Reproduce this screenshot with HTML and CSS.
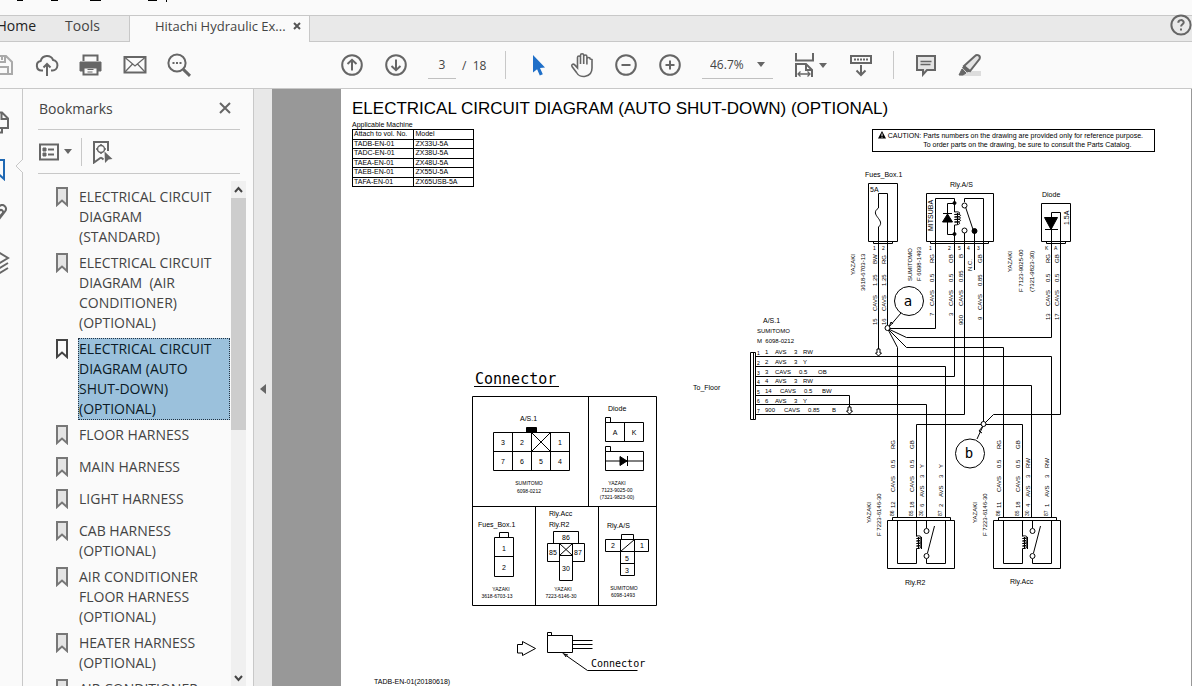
FILE: index.html
```html
<!DOCTYPE html>
<html lang="en">
<head>
<meta charset="utf-8">
<title>Hitachi Hydraulic Excavator</title>
<link rel="stylesheet" href="styles.css">
</head>
<body>
<div class="app">
  <div class="menu-strip">
    <svg width="180" height="8" viewBox="0 0 180 8" aria-hidden="true"><path d="M17 0h6v1h-6zM51 0h7v1h-7zM90 0h11v1h-11zM148 0h9v1h-9zM166 0h1v2h-1z"/></svg>
  </div>
  <nav class="tabs">
    <button class="tab home">Home</button>
    <button class="tab tools">Tools</button>
    <div class="tab doc-tab"><span>Hitachi Hydraulic Ex...</span>
      <button class="tab-close" aria-label="Close tab"><svg width="8" height="8" viewBox="0 0 8 8"><path d="M1 1l6 6M7 1L1 7" stroke="#555" stroke-width="2"/></svg></button>
    </div>
    <button class="help" aria-label="Help"><svg class="ic" width="24" height="24" viewBox="0 0 24 24"><circle cx="13" cy="12" r="9.600"/><path d="M10.300 9.800c0-3.600 5.400-3.400 5.400-.4 0 1.800-2.600 2-2.600 4.200M13 15.600v2"/></svg></button>
  </nav>
  <div class="toolbar">
    <button class="tool save" aria-label="Save"><svg class="ic pale" width="24" height="24" viewBox="0 0 24 24"><path d="M2 3h14l6 6v12H2zM7 3v6h8V3M6 21v-7h12v7"/><path d="M12 4v3"/></svg></button>
    <button class="tool" aria-label="Upload"><svg class="ic" width="24" height="24" viewBox="0 0 24 24"><path d="M8 17.500H6.500a4.800 4.800 0 0 1-.8-9.500 6.600 6.600 0 0 1 12.400-1 5.300 5.300 0 0 1-.6 10.500H16M12 23V11M8.500 14.500L12 11l3.500 3.500"/></svg></button>
    <button class="tool" aria-label="Print"><svg class="ic" width="24" height="24" viewBox="0 0 24 24"><path class="solid" d="M1 9h21v9h-3v-3H4v3H1z"/><path d="M4.500 8V2.500h14V8M4.500 15v6.500h14V15"/><path stroke-width="1.200" d="M8.500 16.500h6M8.500 19h5"/></svg></button>
    <button class="tool" aria-label="Mail"><svg class="ic" width="24" height="24" viewBox="0 0 24 24"><path d="M1.500 4h21v15.500h-21z"/><path stroke-width="1.200" d="M2 4.500l10 8.500 10-8.500M2 19l7.500-8M22 19l-7.500-8"/></svg></button>
    <button class="tool" aria-label="Search"><svg class="ic" width="24" height="24" viewBox="0 0 24 24"><circle cx="10" cy="10" r="8.600"/><path stroke-width="3" d="M16.300 16.300l6.700 6.500"/><path stroke-dasharray="2 1.500" d="M5.500 10h9"/></svg></button>
    <button class="tool first-nav" aria-label="Previous page"><svg class="ic" width="24" height="24" viewBox="0 0 24 24"><circle cx="12" cy="12" r="9.800"/><path d="M12 17.500V7M7.500 11L12 6.800l4.500 4.200"/></svg></button>
    <button class="tool" aria-label="Next page"><svg class="ic" width="24" height="24" viewBox="0 0 24 24"><circle cx="12" cy="12" r="9.800"/><path d="M12 6.500V17M7.500 13l4.500 4.200 4.500-4.200"/></svg></button>
    <input class="page-no" type="text" value="3" aria-label="Page number">
    <span class="page-total">/&nbsp; 18</span>
    <span class="sep"></span>
    <button class="tool" aria-label="Select"><svg width="24" height="24" viewBox="0 0 24 24"><path fill="#1f6fc8" d="M7 2l12 12.500-5 .4 2.800 6.300-3 1.300-2.700-6.300L7 19.500z"/></svg></button>
    <button class="tool" aria-label="Hand"><svg class="ic hand" width="26" height="26" viewBox="0 0 26 26"><path d="M8.500 14V5.500c0-2 3-2 3 0V12M11.500 5V3.300c0-2 3.200-2 3.200 0V12M14.700 4.500c0-2 3.200-2 3.200 0V12.500M17.900 7c0-2 3.300-2 3.300 0l1.800.5v8.500c0 10-12.500 10.500-15.500 4.500L3 14.500c-1-2 1.200-3.200 2.700-1.600l2.800 3V8"/></svg></button>
    <button class="tool" aria-label="Zoom out"><svg class="ic" width="24" height="24" viewBox="0 0 24 24"><circle cx="12" cy="12" r="9.800"/><path d="M7.500 12h9"/></svg></button>
    <button class="tool" aria-label="Zoom in"><svg class="ic" width="24" height="24" viewBox="0 0 24 24"><circle cx="12" cy="12" r="9.800"/><path d="M7.500 12h9M12 7.500v9"/></svg></button>
    <div class="zoom"><select aria-label="Zoom level"><option>46.7%</option></select><span class="caret"></span></div>
    <button class="tool fit" aria-label="Fit width"><svg class="ic" width="24" height="26" viewBox="0 0 24 26"><path d="M3 1v7.500h17V1M3 25V12h10l6 6v7M13 12v6h6"/><path stroke-width="1.300" d="M5 22h12M7.500 19.500L5 22l2.500 2.500M14.500 19.500L17 22l-2.500 2.500"/></svg><span class="caret"></span></button>
    <button class="tool key" aria-label="Reading mode"><svg class="ic" width="24" height="24" viewBox="0 0 24 24"><path d="M2 3h20v7H2zM12 12v10M7.500 17.500l4.500 4.500 4.500-4.500"/><path stroke-dasharray="2 1" d="M5 6.500h14"/></svg></button>
    <span class="sep late"></span>
    <button class="tool" aria-label="Comment"><svg class="ic" width="24" height="24" viewBox="0 0 24 24"><path fill="#e4e4e4" d="M3 3h18v14h-8l-4 4.500V17H3z"/><path stroke-width="1.300" d="M6.500 8.500h11M6.500 11.500h10"/></svg></button>
    <button class="tool" aria-label="Highlight"><svg class="ic" width="24" height="24" viewBox="0 0 24 24"><path fill="#ddd" stroke="none" d="M9 18h14v5H1z"/><path fill="#e4e4e4" d="M6 13L17 3c2-2 6-.5 4.500 3L12 18z"/><path class="solid" d="M6 13l6 5-3 1-4.500-4zM1 22l3-6 4 4-3 2z"/></svg></button>
  </div>
  <div class="workspace">
    <aside class="rail">
      <button aria-label="Pages"><svg class="ic" width="24" height="24" viewBox="0 0 24 24"><path d="M3 2.500h13l6 6V18H3zM15.500 3v6H22M16 18v4.500H2"/></svg></button>
      <button class="on" aria-label="Bookmarks"><svg width="24" height="24" viewBox="0 0 24 24" fill="none" stroke="#1f68b3" stroke-width="2"><path d="M6 3h12v19l-6-5.500L6 22z"/></svg></button>
      <button aria-label="Attachments"><svg class="ic" width="24" height="24" viewBox="0 0 24 24"><path d="M9 18l7.500-8.500c2-2.500-1.500-5-3.500-2.500L5 16M4 12l9-9.500c4-4 9 1 6 5L10 19"/></svg></button>
      <button aria-label="Layers"><svg class="ic" width="24" height="28" viewBox="0 0 24 28"><path d="M12 3l10 6-10 6L2 9zM22 14l-10 6-10-6M22 19l-10 6-10-6"/></svg></button>
      <svg class="notch" width="8" height="16" viewBox="0 0 8 16"><path d="M8 1L1 8l7 7" fill="#fafafa" stroke="#c8c8c8"/></svg>
    </aside>
    <section class="panel">
      <header class="panel-head"><h2>Bookmarks</h2><button aria-label="Close panel"><svg class="ic" width="12" height="12" viewBox="0 0 12 12"><path d="M1 1l10 10M11 1L1 11"/></svg></button></header>
      <div class="panel-tools">
        <button class="opts" aria-label="Options"><svg class="ic" width="20" height="18" viewBox="0 0 20 18"><path d="M1 1.500h18v15H1z"/><path d="M9 6.500h6M9 11.500h6"/><path class="solid" d="M4 5h3v3H4zM4 10h3v3H4z"/></svg><span class="caret"></span></button>
        <span class="sep"></span>
        <button aria-label="Find bookmark"><svg class="ic" width="22" height="24" viewBox="0 0 22 24"><path d="M9 17.500L2 22.500V2h14v9M9 17.500l2.500 2"/><circle cx="9" cy="9" r="3.500" stroke-width="1.500"/><path stroke-width="1.500" d="M9 4v2M9 12v2M4 9h2M12 9h2"/><path class="solid" d="M12.500 11.500l8 7.500-4 .5-3.500 3.500z" stroke="none"/></svg></button>
      </div>
      <div class="panel-body">
        <ul class="marks">
          <li><svg class="bm"><use href="#bm"/></svg><a href="#p1">ELECTRICAL CIRCUIT DIAGRAM (STANDARD)</a></li>
          <li><svg class="bm"><use href="#bm"/></svg><a href="#p2">ELECTRICAL CIRCUIT DIAGRAM &nbsp;(AIR CONDITIONER) (OPTIONAL)</a></li>
          <li class="current"><svg class="bm"><use href="#bm"/></svg><a href="#p3">ELECTRICAL CIRCUIT DIAGRAM (AUTO SHUT-DOWN) (OPTIONAL)</a></li>
          <li><svg class="bm"><use href="#bm"/></svg><a href="#p4">FLOOR HARNESS</a></li>
          <li><svg class="bm"><use href="#bm"/></svg><a href="#p5">MAIN HARNESS</a></li>
          <li><svg class="bm"><use href="#bm"/></svg><a href="#p6">LIGHT HARNESS</a></li>
          <li><svg class="bm"><use href="#bm"/></svg><a href="#p7">CAB HARNESS (OPTIONAL)</a></li>
          <li><svg class="bm"><use href="#bm"/></svg><a href="#p8">AIR CONDITIONER FLOOR HARNESS (OPTIONAL)</a></li>
          <li><svg class="bm"><use href="#bm"/></svg><a href="#p9">HEATER HARNESS (OPTIONAL)</a></li>
          <li><svg class="bm"><use href="#bm"/></svg><a href="#p10">AIR CONDITIONER</a></li>
        </ul>
        <div class="scroll" aria-hidden="true">
          <svg width="15" height="17" viewBox="0 0 15 17"><path d="M4 11l3.500-4 3.500 4" fill="none" stroke="#444" stroke-width="2"/></svg>
          <div class="thumb"></div>
          <svg class="down" width="15" height="17" viewBox="0 0 15 17"><path d="M4 7l3.500 4L11 7" fill="none" stroke="#444" stroke-width="2"/></svg>
        </div>
      </div>
    </section>
    <button class="collapse" aria-label="Collapse panel"><svg width="6" height="10" viewBox="0 0 6 10"><path d="M6 0v10L0 5z" fill="#666"/></svg></button>
    <main class="viewer">
      <article class="sheet">
        <div class="sheet-text">
          <h1>ELECTRICAL CIRCUIT DIAGRAM (AUTO SHUT-DOWN) (OPTIONAL)</h1>
          <div class="notes">
            <table class="models">
              <caption>Applicable Machine</caption>
              <tr><th>Attach to vol. No.</th><th>Model</th></tr>
              <tr><td>TADB-EN-01</td><td>ZX33U-5A</td></tr>
              <tr><td>TADC-EN-01</td><td>ZX38U-5A</td></tr>
              <tr><td>TAEA-EN-01</td><td>ZX48U-5A</td></tr>
              <tr><td>TAEB-EN-01</td><td>ZX55U-5A</td></tr>
              <tr><td>TAFA-EN-01</td><td>ZX65USB-5A</td></tr>
            </table>
            <div class="caution">
              <svg width="8" height="8" viewBox="0 0 8 8"><path d="M4 0l4 7.500H0z"/><path d="M4 2.500V5M4 5.700v1" stroke="#fff"/></svg>
              <span>CAUTION:</span>
              <p>Parts numbers on the drawing are provided only for reference purpose.<br>To order parts on the drawing, be sure to consult the Parts Catalog.</p>
            </div>
          </div>
        </div>
        <svg class="drawing" viewBox="341 89 850 597">
          <defs>
            <g id="relay">
              <path d="M887.500 520.500h67v48h-67zM892.500 517.500h58v3h-58zM897.500 520v43.500h19V550M916.500 520v16.500M926.500 520v8M926.500 559v4.500h19V520M927.500 553l7-27"/>
              <path d="M916.500 536c6-1 6 3 0 2.500 6-1.500 6 3 0 2.500 6-1.500 6 3 0 2.500 6-1.500 6 3 0 2.500 6-1.500 6 3 0 2.500v1.500M918.500 537v12M921.500 537v12"/>
              <circle class="pin" cx="926.500" cy="531" r="2.500"/><circle class="pin" cx="926.500" cy="556" r="2.500"/>
            </g>
            <g id="flow"><path class="pin" d="M-1.500 0h3v4h1.500L0 7l-3-3h1.500z"/></g>
            <g id="bm"><path d="M1 1h10v17l-5-4.500L1 18z" stroke-width="2"/></g>
          </defs>
          <!-- component outlines -->
          <g class="line">
            <path d="M868.500 183.500h29v58h-29zM873.500 241.500h19v2h-19zM878.500 208v-14.500h9V325M878.500 227v122M878.500 208c-10 7 8 12 0 19"/>
            <path d="M926.500 193.500h67v48h-67zM930.500 241.500h58v2h-58z"/>
            <path d="M935.500 328.500v-130h19v13.500M954.500 225v151.500M954.500 203.500h-7v31h7M964.500 202v-3.500h19V424M965.500 207l8 24M964.500 233v181.500M974.500 231v39M943 213.500h9"/>
            <path d="M954.500 212c7-1 7 3 0 2.500 8-1.500 8 3 0 2.500 8-1.500 8 3 0 2.500 8-1.500 8 3 0 2.500 7-1 7 3 0 3M957.500 213v11"/>
            <path class="solid-fill" d="M947.500 214l5 8h-10zM1044.500 217.500h13l-6.500 12z"/>
            <circle class="solid-fill" cx="954.500" cy="203" r="1.500"/><circle class="solid-fill" cx="954.500" cy="234" r="1.500"/><circle class="solid-fill" cx="974.500" cy="231" r="2.500"/>
            <circle class="pin" cx="964.500" cy="205.500" r="2.500"/><circle class="pin" cx="964.500" cy="230.500" r="2.500"/>
            <path d="M1041.500 203.500h29v38h-29zM1046.500 241.500h19v2h-19zM1045 229.500h13M1051.500 337.500v-125h9v202h-67l-10 10"/>
          </g>
          <!-- harness wires -->
          <g class="line">
            <path d="M887.500 328.500h48M887.500 328.500l19 9h145M887.500 328.500l19 19h97V518M887.500 328.500l10 19V518"/>
            <path d="M750.500 352.500h5v67h-5zM753.500 352.500v67M755.500 356.500h296V518M755.500 366.500h190V518M755.500 376.500h199M755.500 385.500h276V518M755.500 395.500h94V407M755.500 404.500h171V518M755.500 414.500h209M916.500 518v-93.500h106V518"/>
            <path d="M901 313l-12 14 2-5 2 2M977 439l6-13-4 5 3 2"/>
            <circle class="pin" cx="887.500" cy="328" r="2.500"/><circle class="pin" cx="983.500" cy="424" r="2.500"/>
            <circle class="pin" cx="909" cy="301" r="14.500"/><circle class="pin" cx="970" cy="453.500" r="14.500"/>
            <use href="#flow" x="878.500" y="349"/><use href="#flow" x="849.500" y="407"/>
            <use href="#relay"/><use href="#relay" x="106"/>
          </g>
          <!-- connector chart -->
          <g class="line">
            <path d="M474 386.500h85M472.500 396.500h184v209h-184zM472.500 506.500h184M588.500 396.500v110M535.500 506.500v99M598.500 506.500v99"/>
            <path d="M493.500 432.500h76v38h-76zM493.500 451.500h76M512.500 432.500v38M531.500 432.500v38M550.500 432.500v38M531.500 432.500l19 19M550.500 432.500l-19 19"/>
            <path class="solid-fill" d="M526.500 427.500h10v5h-10zM620 456.500v9l7-4.500z"/>
            <path d="M605.500 417.500h5v5h-5zM605.500 422.500h38v19h-38zM624.500 422.500v19M605.500 446.500h5v5h-5zM605.500 451.500h38v19h-38zM605.500 461h38M627.500 456v10"/>
            <path d="M499.500 532.500h9v5h-9zM494.500 537.500h19v39h-19zM494.500 556.500h19"/>
            <path d="M553.500 531.500h25v12h-25zM547.500 543.500h12v18h-12zM572.500 543.500h12v18h-12zM559.500 543.500h13v37h-13zM559.500 555.500h13M559.500 543.500l13 12M572.500 543.500l-13 12"/>
            <path d="M621.500 534.500h12v5h-12zM605.500 539.500h43v12h-43zM620.500 539.500v36h14v-36M620.500 551.500l14-12M620.500 563.500h14"/>
            <path d="M517.500 644.500h5v-3l13 7-13 7v-2.500h-5zM547.500 632.500h4v3h-4zM547.500 635.500h25v17h-25zM572.500 640.500h20M572.500 644.500h20M572.500 648.500h20M562.500 653l25 17.500h50M568 655l-4-1 2 3"/>
          </g>
          <g class="t7">
            <text x="865" y="177">Fues_Box.1</text><text x="870" y="192">5A</text><text x="950" y="187">Rly.A/S</text><text x="1042" y="197">Diode</text>
            <text x="763" y="323">A/S.1</text><text x="693" y="390">To_Floor</text><text x="905" y="585">Rly.R2</text><text x="1010" y="584">Rly.Acc</text>
            <text x="520" y="421">A/S.1</text><text x="608" y="411">Diode</text><text x="478" y="527">Fues_Box.1</text><text x="549" y="516">Rly.Acc</text><text x="549" y="527">Rly.R2</text><text x="607" y="528">Rly.A/S</text>
            <text x="374" y="684">TADB-EN-01(20180618)</text>
          </g>
          <g class="t7 mid">
            <text x="503" y="445">3</text><text x="522" y="445">2</text><text x="560" y="445">1</text><text x="503" y="464">7</text><text x="522" y="464">6</text><text x="541" y="464">5</text><text x="560" y="464">4</text>
            <text x="615" y="435">A</text><text x="634" y="435">K</text><text x="504" y="551">1</text><text x="504" y="570">2</text>
            <text x="566" y="540">86</text><text x="553" y="555">85</text><text x="578" y="555">87</text><text x="566" y="571">30</text>
            <text x="613" y="548">2</text><text x="642" y="548">1</text><text x="627" y="561">5</text><text x="627" y="573">3</text>
          </g>
          <g class="t5 mid">
            <text x="529" y="485">SUMITOMO</text><text x="529" y="493">6098-0212</text>
            <text x="617" y="485">YAZAKI</text><text x="617" y="492">7123-9025-00</text><text x="617" y="499">(7321-9823-00)</text>
            <text x="501" y="591">YAZAKI</text><text x="497" y="598">3618-6703-13</text><text x="563" y="591">YAZAKI</text><text x="561" y="598">7223-6146-30</text><text x="624" y="590">SUMITOMO</text><text x="623" y="597">6098-1493</text>
          </g>
          <g class="t6">
            <text x="757" y="333">SUMITOMO</text><text x="757" y="343">M&#160;&#160;6098-0212</text>
            <text x="765" y="354">1</text><text x="775" y="354">AVS</text><text x="794" y="354">3</text><text x="803" y="354">RW</text>
            <text x="765" y="364">2</text><text x="775" y="364">AVS</text><text x="794" y="364">3</text><text x="803" y="364">Y</text>
            <text x="765" y="374">3</text><text x="775" y="374">CAVS</text><text x="799" y="374">0.5</text><text x="818" y="374">OB</text>
            <text x="765" y="383">4</text><text x="775" y="383">AVS</text><text x="794" y="383">3</text><text x="803" y="383">RW</text>
            <text x="765" y="393">14</text><text x="780" y="393">CAVS</text><text x="804" y="393">0.5</text><text x="822" y="393">BW</text>
            <text x="765" y="403">6</text><text x="775" y="403">AVS</text><text x="794" y="403">3</text><text x="803" y="403">Y</text>
            <text x="765" y="412">900</text><text x="784" y="412">CAVS</text><text x="808" y="412">0.85</text><text x="832" y="412">B</text>
          </g>
          <g class="t5">
            <text x="757" y="355">1</text><text x="757" y="365">2</text><text x="757" y="375">3</text><text x="757" y="384">4</text><text x="757" y="394">5</text><text x="757" y="403">6</text><text x="757" y="413">7</text>
            <text x="873" y="250">1</text><text x="882" y="250">2</text><text x="929" y="250">1</text><text x="948" y="250">2</text><text x="958" y="250">5</text><text x="967" y="250">4</text><text x="977" y="250">3</text><text x="1045" y="250">K</text><text x="1054" y="250">A</text>
          </g>
          <!-- vertical wire labels -->
          <g class="t6" transform="rotate(-90)">
            <text x="-325" y="877">15</text><text x="-311" y="877">CAVS</text><text x="-286" y="877">1.25</text><text x="-264" y="877">BW</text>
            <text x="-325" y="886">16</text><text x="-311" y="886">CAVS</text><text x="-286" y="886">1.25</text><text x="-264" y="886">RG</text>
            <text x="-316" y="934">7</text><text x="-306" y="934">CAVS</text><text x="-282" y="934">0.5</text><text x="-263" y="934">RG</text>
            <text x="-316" y="953">3</text><text x="-306" y="953">CAVS</text><text x="-282" y="953">0.5</text><text x="-263" y="953">OB</text>
            <text x="-325" y="963">900</text><text x="-306" y="963">CAVS</text><text x="-282" y="963">0.85</text><text x="-258" y="963">B</text>
            <text x="-271" y="972">N.C.</text>
            <text x="-320" y="982">9</text><text x="-310" y="982">CAVS</text><text x="-286" y="982">0.85</text><text x="-263" y="982">GB</text>
            <text x="-320" y="1050">13</text><text x="-306" y="1050">CAVS</text><text x="-282" y="1050">0.5</text><text x="-263" y="1050">RG</text>
            <text x="-320" y="1059">17</text><text x="-306" y="1059">CAVS</text><text x="-282" y="1059">0.5</text><text x="-263" y="1059">GB</text>
            <text x="-275" y="855">YAZAKI</text><text x="-291" y="865">3618-6703-13</text><text x="-281" y="912">SUMITOMO</text><text x="-281" y="921">F 6098-1493</text>
            <text x="-272" y="1012">YAZAKI</text><text x="-292" y="1023">F 7123-9025-00</text><text x="-292" y="1034">(7321-9823-30)</text>
            <text x="-508" y="895">12</text><text x="-492" y="895">CAVS</text><text x="-468" y="895">0.5</text><text x="-449" y="895">RG</text>
            <text x="-508" y="914">18</text><text x="-492" y="914">CAVS</text><text x="-468" y="914">0.5</text><text x="-449" y="914">GB</text>
            <text x="-507" y="924">6</text><text x="-497" y="924">AVS</text><text x="-478" y="924">3</text><text x="-468" y="924">Y</text>
            <text x="-507" y="943">2</text><text x="-497" y="943">AVS</text><text x="-478" y="943">3</text><text x="-468" y="943">Y</text>
            <text x="-508" y="1001">11</text><text x="-492" y="1001">CAVS</text><text x="-468" y="1001">0.5</text><text x="-449" y="1001">RG</text>
            <text x="-508" y="1020">18</text><text x="-492" y="1020">CAVS</text><text x="-468" y="1020">0.5</text><text x="-449" y="1020">GB</text>
            <text x="-507" y="1030">4</text><text x="-497" y="1030">AVS</text><text x="-478" y="1030">3</text><text x="-468" y="1030">RW</text>
            <text x="-507" y="1049">1</text><text x="-497" y="1049">AVS</text><text x="-478" y="1049">3</text><text x="-468" y="1049">RW</text>
            <text x="-523" y="871">YAZAKI</text><text x="-536" y="881">F 7223-6146-30</text><text x="-523" y="977">YAZAKI</text><text x="-536" y="987">F 7223-6146-30</text>
          </g>
          <g class="t5" transform="rotate(-90)">
            <text x="-516" y="894">86</text><text x="-516" y="913">85</text><text x="-516" y="923">30</text><text x="-516" y="942">87</text>
            <text x="-516" y="1000">86</text><text x="-516" y="1019">85</text><text x="-516" y="1029">30</text><text x="-516" y="1048">87</text>
          </g>
          <g class="t7" transform="rotate(-90)"><text x="-231" y="933">MITSUBA</text><text x="-225" y="1069">1.5A</text></g>
          <g class="mono mid"><text x="908" y="306">a</text><text x="969" y="458">b</text></g>
          <text class="mono-lg" x="475" y="384">Connector</text>
          <text class="mono-sm" x="591" y="667">Connector</text>
        </svg>
      </article>
    </main>
  </div>
</div>
</body>
</html>
```
FILE: styles.css
```css
* { box-sizing: border-box; }
body { margin: 0; font-family: "Open Sans", "Noto Sans", sans-serif; font-size: 14px; color: #444; }
button { border: 0; padding: 0; background: none; font: inherit; color: inherit; display: flex; align-items: center; justify-content: center; flex: none; }
.app { height: 100vh; display: flex; flex-direction: column; overflow: hidden; background: #fafafa; }
.ic { fill: none; stroke: #666; stroke-width: 2; flex: none; }
.ic.pale { stroke: #aaa; }
.ic .solid { fill: #666; stroke-width: 1; }
.ic.hand { stroke-width: 1.6; }
.caret { width: 0; height: 0; border: 4px solid transparent; border-top: 5px solid #666; border-bottom: 0; }

.menu-strip { flex: none; height: 16px; border-bottom: 1px solid #c8c8c8; }
.menu-strip svg { display: block; }

.tabs { flex: none; display: flex; height: 26px; background: #e9e9e9; }
.tab { border-bottom: 1px solid #c8c8c8; padding-bottom: 6px; }
.home { width: 36px; justify-content: flex-end; color: #222; }
.tools { width: 93px; }
.doc-tab { display: flex; align-items: center; gap: 7px; padding-left: 25px; width: 181px; background: #fafafa; border: solid #c8c8c8; border-width: 0 1px; white-space: nowrap; font-size: 13px; }
.tabs .help { flex: 1; justify-content: flex-end; border-bottom: 1px solid #c8c8c8; padding-bottom: 8px; }

.toolbar { flex: none; display: flex; align-items: center; height: 47px; border-bottom: 1px solid #c8c8c8; font-size: 12px; overflow: hidden; }
.tool { width: 44px; height: 44px; }
.save { width: 25px; justify-content: flex-end; padding-right: 11px; }
.first-nav { margin-left: 129px; }
.page-no { margin-left: 10px; width: 28px; height: 28px; border: 0; border-bottom: 1px solid #c0c0c0; background: none; text-align: center; font: inherit; color: inherit; padding: 0; }
.page-total { margin-left: 6px; width: 30px; white-space: nowrap; }
.sep { width: 1px; height: 28px; background: #c8c8c8; margin: 0 10px 0 13px; }
.sep.late { margin-left: 10px; }
.zoom { display: flex; align-items: center; margin-left: 10px; width: 71px; height: 28px; padding: 0 8px; border-bottom: 1px solid #c0c0c0; }
.zoom select { flex: 1; min-width: 0; border: 0; padding: 0; appearance: none; background: none; font: inherit; color: inherit; }
.fit { margin-left: 16px; gap: 2px; justify-content: flex-start; padding-left: 4px; }
.key { margin-left: 6px; }

.workspace { flex: 1; min-height: 0; display: flex; }
.rail { position: relative; flex: none; width: 23px; padding-top: 9px; border-right: 1px solid #c8c8c8; }
.rail button { width: 44px; height: 47px; margin-left: -24px; }
.notch { position: absolute; right: -1px; top: 69px; }

.panel { flex: none; width: 231px; display: flex; flex-direction: column; border-right: 1px solid #c8c8c8; }
.panel-head { display: flex; align-items: center; justify-content: space-between; height: 41px; margin: 0 13px 0 15px; padding: 0 9px 2px 1px; border-bottom: 1px solid #c8c8c8; }
.panel-head h2 { margin: 0; font-size: 14px; font-weight: 400; }
.panel-tools { display: flex; align-items: center; height: 44px; margin: 0 13px 0 15px; border-bottom: 1px solid #c8c8c8; }
.panel-tools .sep { margin: 0 10px 0 9px; }
.opts { gap: 5px; padding-left: 1px; }
.panel-body { flex: 1; min-height: 0; display: flex; padding: 7px 7px 0 32px; }
.marks { flex: 1; height: 100%; overflow: hidden; list-style: none; margin: 0; padding: 3px 1px 0 0; line-height: 20px; }
.marks li { display: flex; align-items: flex-start; gap: 10px; min-height: 32px; padding: 2px 0; }
.marks a { flex: 1; padding-right: 4px; color: #444; text-decoration: none; border: 1px solid transparent; }
.bm { width: 12px; height: 20px; margin: 1px 0; margin-left: 1px; flex: none; fill: #e4e4e4; stroke: #777; }
.marks .current a { background: #9bc1dc; border: 1px dotted #234; color: #0b1a26; }
.current .bm { stroke: #444; fill: #fafafa; }
.scroll { flex: none; width: 15px; display: flex; flex-direction: column; background: #f0f0f0; }
.scroll svg { flex: none; }
.thumb { height: 46%; background: #cdcdcd; }
.scroll .down { margin-top: auto; }
.collapse { width: 18px; background: #e8e8e8; }
.collapse svg { margin-top: 2px; }

.viewer { flex: 1; min-width: 0; overflow: hidden; background: #989898; padding: 0 1px 0 69px; }
.sheet { display: grid; align-items: start; background: #fff; color: #000; font-family: "Liberation Sans", sans-serif; }
.sheet > * { grid-area: 1 / 1; }
.sheet-text { padding: 10px 36px 0 11px; }
.sheet h1 { margin: 0; font-size: 17px; line-height: 20px; font-weight: 400; white-space: nowrap; }
.notes { display: flex; justify-content: space-between; align-items: flex-start; padding-top: 2px; }
.models { width: 122px; height: 58px; border-collapse: collapse; font-size: 7px; line-height: 8px; table-layout: fixed; }
.models caption { text-align: left; }
.models th, .models td { border: 1px solid #000; padding: 0 1px; text-align: left; font-weight: 400; white-space: nowrap; }
.models tr > :last-child { padding-left: 2px; }
.caution { display: flex; gap: 2px; margin-top: 8px; padding: 1px 11px 2px 5px; border: 1px solid #000; font-size: 7px; line-height: 9px; white-space: nowrap; }
.caution p { margin: 0; }
.drawing { width: 100%; height: auto; display: block; }
.line { fill: none; stroke: #000; stroke-width: 1; }
.line .pin { fill: #fff; }
.line .solid-fill { fill: #000; }
.t5, .t6, .t7 { font-family: "Liberation Sans", sans-serif; }
.t5 { font-size: 5px; }
.t6 { font-size: 6px; }
.t7 { font-size: 7px; }
.mid { text-anchor: middle; }
.mono, .mono-sm, .mono-lg { font-family: "DejaVu Sans Mono", monospace; }
.mono { font-size: 14px; }
.mono-sm { font-size: 10px; }
.mono-lg { font-size: 15px; }
```
